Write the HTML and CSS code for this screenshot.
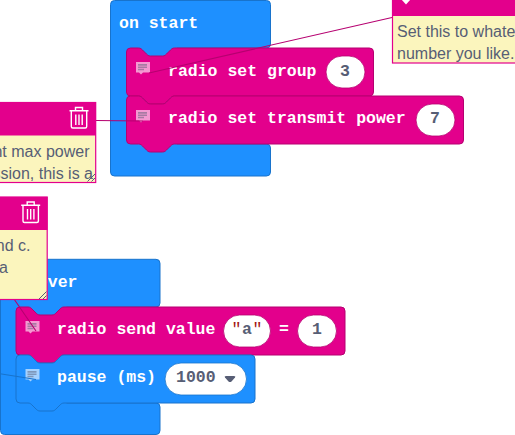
FILE: index.html
```
<!DOCTYPE html>
<html lang="en">
<head>
<meta charset="utf-8">
<title>Blocks workspace</title>
<link rel="stylesheet" href="styles.css">
</head>
<body>
<svg class="workspace" width="515" height="435" viewBox="0 0 515 435">
  <defs>
    <g id="note">
      <path class="note-bubble" d="M0 0h14v10.500h-7l-2 2-2-2h-3z"/>
      <path class="note-lines" d="M2 2h9v1.700h-9zM2 4.500h9v1.500h-9zM2 6.700h6v1.500h-6z"/>
    </g>
    <g id="trash">
      <path d="M0 3.700h19M6 3.500v-3h7v3M1.800 4v15.500q0 1.500 1.500 1.500h12.400q1.500 0 1.500-1.500v-15.500M6.300 7.500v10.500M9.500 7.500v10.500M12.700 7.500v10.500"/>
    </g>
    <path id="grip" class="grip" d="M0 7.500l7.500-7.500M4 7.500l3.500-3.500"/>
  </defs>

  <g class="event">
    <path d="M114.500 .5h152a4 4 0 0 1 4 4v39.500a4 4 0 0 1-4 4h-140v96h140a4 4 0 0 1 4 4v24a4 4 0 0 1-4 4h-152a4 4 0 0 1-4-4v-167.500a4 4 0 0 1 4-4z"/>
    <text class="label" x="119" y="28">on start</text>
  </g>
  <rect class="event-fill" x="125" y="46" width="52" height="110"/>
  <g class="radio">
    <path d="M126.500 52a4 4 0 0 1 4-4h8c2 0 3 1 4 2l4 4c1 1 2 2 4 2h12c2 0 3-1 4-2l4-4c1-1 2-2 4-2h195a4 4 0 0 1 4 4v40a4 4 0 0 1-4 4h-195c-2 0-3 1-4 2l-4 4c-1 1-2 2-4 2h-12c-2 0-3-1-4-2l-4-4c-1-1-2-2-4-2h-8a4 4 0 0 1-4-4z"/>
    <text class="label" x="168" y="76">radio set group</text>
    <rect class="field" x="326" y="56" width="39" height="32" rx="16"/>
    <text class="value" x="340" y="76">3</text>
    <path d="M126.500 100a4 4 0 0 1 4-4h8c2 0 3 1 4 2l4 4c1 1 2 2 4 2h12c2 0 3-1 4-2l4-4c1-1 2-2 4-2h285a4 4 0 0 1 4 4v40a4 4 0 0 1-4 4h-285c-2 0-3 1-4 2l-4 4c-1 1-2 2-4 2h-12c-2 0-3-1-4-2l-4-4c-1-1-2-2-4-2h-8a4 4 0 0 1-4-4z"/>
    <text class="label" x="168" y="123">radio set transmit power</text>
    <rect class="field" x="416" y="104" width="39" height="32" rx="16"/>
    <text class="value" x="430" y="123">7</text>
  </g>
  <use href="#note" x="136" y="62"/>
  <use href="#note" x="136" y="110"/>

  <g class="event">
    <path d="M4.500 259.300h151.500a4 4 0 0 1 4 4v39.700a4 4 0 0 1-4 4h-140v96h140a4 4 0 0 1 4 4v23.500a4 4 0 0 1-4 4h-151.500a4 4 0 0 1-4-4v-167.200a4 4 0 0 1 4-4z"/>
    <text class="label" x="8.200" y="287">forever</text>
  </g>
  <rect class="event-fill" x="14.500" y="305" width="52" height="110"/>
  <g class="radio">
    <path d="M16 311a4 4 0 0 1 4-4h8c2 0 3 1 4 2l4 4c1 1 2 2 4 2h12c2 0 3-1 4-2l4-4c1-1 2-2 4-2h277a4 4 0 0 1 4 4v40a4 4 0 0 1-4 4h-277c-2 0-3 1-4 2l-4 4c-1 1-2 2-4 2h-12c-2 0-3-1-4-2l-4-4c-1-1-2-2-4-2h-8a4 4 0 0 1-4-4z"/>
    <text class="label" x="57" y="334">radio send value</text>
    <rect class="field" x="223.500" y="315" width="47" height="32" rx="16"/>
    <text class="quote" x="231.500" y="334">"</text>
    <text class="value" x="242" y="334">a</text>
    <text class="quote" x="252.500" y="334">"</text>
    <text class="label" x="279" y="334">=</text>
    <rect class="field" x="297.500" y="315" width="39" height="32" rx="16"/>
    <text class="value" x="312" y="334">1</text>
  </g>
  <g class="event">
    <path d="M16 359a4 4 0 0 1 4-4h8c2 0 3 1 4 2l4 4c1 1 2 2 4 2h12c2 0 3-1 4-2l4-4c1-1 2-2 4-2h187a4 4 0 0 1 4 4v40a4 4 0 0 1-4 4h-187c-2 0-3 1-4 2l-4 4c-1 1-2 2-4 2h-12c-2 0-3-1-4-2l-4-4c-1-1-2-2-4-2h-8a4 4 0 0 1-4-4z"/>
    <text class="label" x="57" y="382">pause (ms)</text>
    <rect class="field" x="165" y="363" width="81.500" height="32" rx="16"/>
    <text class="value" x="176" y="382">1000</text>
    <path class="arrow" d="M226 376h8q2 0 1 1.500l-3.500 4q-1.500 1.200-3 0l-3.500-4q-1-1.500 1-1.500z"/>
  </g>
  <use href="#note" x="25.500" y="321"/>
  <use href="#note" x="25.500" y="369"/>

  <path class="link" d="M392 17.500L149 73M96 120.500L143 121M14 299L36 331"/>
  <path class="link event-link" d="M0 373.800L36 379.500"/>

  <g class="comment">
    <rect class="paper" x="392.500" y="-20" width="150" height="83"/>
    <rect class="header" x="392" y="-20" width="150" height="36"/>
    <path class="chevron" d="M401 -1h10l-5 5.500z"/>
    <text x="397" y="37">Set this to whatever</text>
    <text x="397" y="59">number you like.</text>
  </g>
  <g class="comment">
    <rect class="paper" x="-20" y="102.500" width="115.700" height="80"/>
    <rect class="header" x="-20" y="102.500" width="116" height="33"/>
    <use class="trash" href="#trash" x="69.500" y="107"/>
    <text class="end" x="89.500" y="157">nt max power</text>
    <text class="end" x="93" y="179">ssion, this is a</text>
    <use href="#grip" x="87.500" y="174"/>
  </g>
  <g class="comment">
    <rect class="paper" x="-20" y="197" width="67.200" height="102.500"/>
    <rect class="header" x="-20" y="197" width="67.500" height="33"/>
    <use class="trash" href="#trash" x="21.200" y="201.500"/>
    <text class="end" x="30.500" y="251">nd c.</text>
    <text class="end" x="8" y="273">a</text>
    <use href="#grip" x="39" y="291.500"/>
  </g>
</svg>
</body>
</html>
```

FILE: styles.css
```
body {
  margin: 0;
  background: #fff;
  overflow: hidden;
}
.workspace {
  display: block;
}
.event > path {
  fill: #1e90ff;
  stroke: #1873cc;
}
.event-fill {
  fill: #1e90ff;
}
.radio > path {
  fill: #e3008c;
  stroke: #b60070;
}
.label,
.value,
.quote {
  font: bold 16.5px "Liberation Mono", monospace;
  white-space: pre;
}
.label {
  fill: #fff;
}
.value {
  fill: #575e75;
}
.quote {
  fill: #a31515;
  font-weight: normal;
}
.field {
  fill: #fff;
  stroke: #b60070;
  stroke-width: .8;
}
.event .field {
  stroke: #1873cc;
}
.event .arrow {
  fill: #575e75;
  stroke: none;
}
.note-bubble {
  fill: #fff;
  opacity: .6;
}
.note-lines {
  fill: #575e75;
  opacity: .5;
}
.link {
  fill: none;
  stroke: #b60070;
  stroke-width: 1.1;
}
.event-link {
  stroke: #1873cc;
}
.comment text {
  font: 16px "Liberation Sans", sans-serif;
  fill: #575e75;
}
.comment .end {
  text-anchor: end;
}
.paper {
  fill: #fbf5bd;
  stroke: #e3008c;
  stroke-width: 1.2;
}
.header {
  fill: #e3008c;
}
.chevron {
  fill: #fff;
}
.trash {
  fill: none;
  stroke: #fff;
  stroke-width: 1.4;
}
.grip {
  fill: none;
  stroke: #575e75;
}
```
